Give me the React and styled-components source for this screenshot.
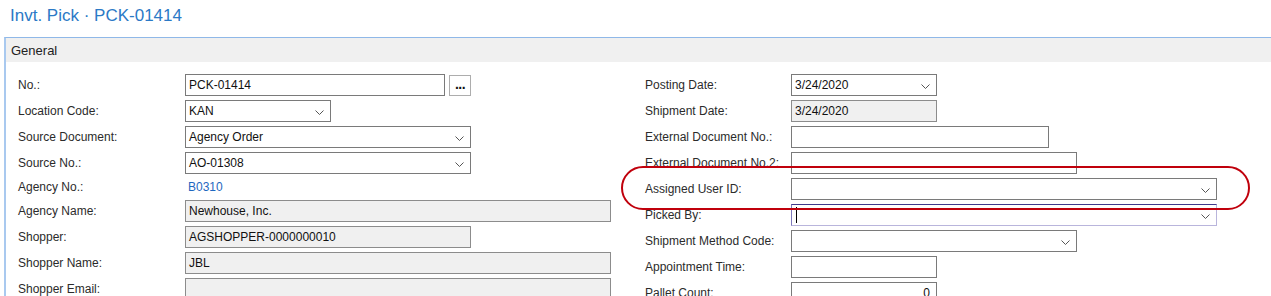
import React from 'react'
import styled, { createGlobalStyle } from 'styled-components'

const GlobalStyle = createGlobalStyle`
    html, body {
        margin: 0;
        padding: 0;
        background: #ffffff;
        overflow: hidden;
    }
    body {
        font-family: "Liberation Sans", Arial, sans-serif;
        color: #262626;
    }
`

const Page = styled.div`
    position: relative;
    width: 1271px;
    height: 296px;
    overflow: hidden;
`

const Title = styled.h1`
    margin: 0 0 11px 0;
    padding: 6px 0 0 10px;
    font-size: 17px;
    line-height: 20px;
    font-weight: 400;
    color: #2b79c6;
`

const Panel = styled.section`
    margin: 0 -20px 0 4px;
    border-top: 1px solid #8fb8e8;
    border-left: 2px solid #a9c9ef;
`

const PanelHeader = styled.div`
    background: #f0f0f0;
    height: 24px;
    padding: 2px 0 0 5px;
    box-sizing: border-box;
    font-size: 13px;
    line-height: 22px;
    color: #222;
`

const PanelBody = styled.div`
    display: grid;
    grid-template-columns: 627px 1fr;
    padding: 12px 0 0 12px;
`

const Column = styled.div`
    display: flex;
    flex-direction: column;
    gap: 4px;
`

const Row = styled.div`
    display: flex;
    align-items: center;
    height: ${p => (p.$short ? '18px' : '22px')};
`

const Label = styled.div`
    width: ${p => p.$w}px;
    flex: none;
    font-size: 12px;
    color: #2b2b2b;
    white-space: nowrap;
`

const Field = styled.div`
    position: relative;
    width: ${p => p.$w}px;
    height: 22px;
    box-sizing: border-box;
    border: 1px solid ${p => (p.$readOnly ? '#8c8c8c' : '#7a7a7a')};
    background: ${p => (p.$readOnly ? '#f0f0f0' : '#ffffff')};
    display: flex;
    align-items: center;
    justify-content: ${p => (p.$right ? 'flex-end' : 'flex-start')};
    padding: 0 ${p => (p.$right ? '6px' : '3px')} 0 3px;
    font-size: 12px;
    color: #111;
    ${p =>
        p.$focused &&
        `
        border-color: #b9b5dc;
        border-top-color: #3f3a8c;
        border-left-color: #7e79bd;
    `}
`

const Caret = styled.span`
    display: block;
    width: 1px;
    height: 16px;
    margin-left: 1px;
    background: #000;
`

const Chevron = styled.svg`
    position: absolute;
    right: 6px;
    top: 9px;
`

const LinkText = styled.span`
    font-size: 12px;
    color: #1f68c0;
    padding-left: 3px;
`

const DotsButton = styled.div`
    width: 22px;
    height: 21px;
    margin-left: 4px;
    box-sizing: border-box;
    border: 1px solid #adadad;
    background: #fff;
    font-weight: 700;
    font-size: 14px;
    line-height: 17px;
    text-align: center;
    color: #111;
    letter-spacing: -0.5px;
`

const Highlight = styled.div`
    position: absolute;
    left: 621px;
    top: 166px;
    width: 629px;
    height: 44px;
    box-sizing: border-box;
    border: 2px solid #c0000c;
    border-radius: 22px;
    pointer-events: none;
`

const Down = () => (
    <Chevron width="9" height="5" viewBox="0 0 9 5">
        <polyline points="0.5,0.5 4.5,4.5 8.5,0.5" fill="none" stroke="#555" strokeWidth="1" />
    </Chevron>
)

const Input = ({ w, value, select, readOnly, right, focused }) => (
    <Field $w={w} $readOnly={readOnly} $right={right} $focused={focused}>
        {focused && <Caret />}
        {value}
        {select && <Down />}
    </Field>
)

const leftRows = [
    { label: 'No.:', w: 260, value: 'PCK-01414', dots: true },
    { label: 'Location Code:', w: 146, value: 'KAN', select: true },
    { label: 'Source Document:', w: 286, value: 'Agency Order', select: true },
    { label: 'Source No.:', w: 286, value: 'AO-01308', select: true },
    { label: 'Agency No.:', link: 'B0310' },
    { label: 'Agency Name:', w: 426, value: 'Newhouse, Inc.', readOnly: true },
    { label: 'Shopper:', w: 286, value: 'AGSHOPPER-0000000010', readOnly: true },
    { label: 'Shopper Name:', w: 426, value: 'JBL', readOnly: true },
    { label: 'Shopper Email:', w: 426, value: '', readOnly: true },
]

const rightRows = [
    { label: 'Posting Date:', w: 146, value: '3/24/2020', select: true },
    { label: 'Shipment Date:', w: 146, value: '3/24/2020', readOnly: true },
    { label: 'External Document No.:', w: 258, value: '' },
    { label: 'External Document No.2:', w: 286, value: '' },
    { label: 'Assigned User ID:', w: 426, value: '', select: true },
    { label: 'Picked By:', w: 426, value: '', select: true, focused: true },
    { label: 'Shipment Method Code:', w: 286, value: '', select: true },
    { label: 'Appointment Time:', w: 146, value: '' },
    { label: 'Pallet Count:', w: 146, value: '0', right: true },
]

const FieldRow = ({ row, labelWidth }) => (
    <Row $short={!!row.link}>
        <Label $w={labelWidth}>{row.label}</Label>
        {row.link ? (
            <LinkText>{row.link}</LinkText>
        ) : (
            <>
                <Input
                    w={row.w}
                    value={row.value}
                    select={row.select}
                    readOnly={row.readOnly}
                    right={row.right}
                    focused={row.focused}
                />
                {row.dots && <DotsButton>...</DotsButton>}
            </>
        )}
    </Row>
)

export default function App() {
    return (
        <Page>
            <GlobalStyle />
            <Title>Invt. Pick · PCK-01414</Title>
            <Panel>
                <PanelHeader>General</PanelHeader>
                <PanelBody>
                    <Column>
                        {leftRows.map(r => (
                            <FieldRow key={r.label} row={r} labelWidth={167} />
                        ))}
                    </Column>
                    <Column>
                        {rightRows.map(r => (
                            <FieldRow key={r.label} row={r} labelWidth={146} />
                        ))}
                    </Column>
                </PanelBody>
            </Panel>
            <Highlight />
        </Page>
    )
}
